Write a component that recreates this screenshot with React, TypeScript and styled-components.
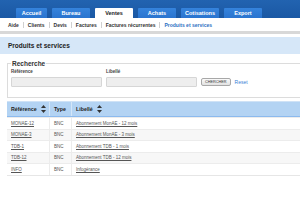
import React from "react";
import styled, { createGlobalStyle } from "styled-components";

const GlobalStyle = createGlobalStyle`
  html, body {
    margin: 0;
    padding: 0;
    background: #ffffff;
    font-family: "Liberation Sans", Arial, sans-serif;
    color: #333;
  }
  body {
    width: 300px;
    height: 200px;
    overflow: hidden;
  }
`;

const TopBar = styled.div`
  height: 18px;
  background: linear-gradient(to bottom, #2263b0, #1a58a4);
  display: flex;
  align-items: flex-end;
  gap: 5px;
  padding-left: 16px;
`;

const Tab = styled.div<{ $active?: boolean; $w?: number }>`
  width: ${(p) => p.$w ?? 38}px;
  height: 10px;
  border-radius: 1px 1px 0 0;
  background: ${(p) => (p.$active ? "#ffffff" : "linear-gradient(to bottom, #3583dc, #2a74cf)")};
  color: ${(p) => (p.$active ? "#222" : "#ffffff")};
  font-size: 5.5px;
  font-weight: bold;
  display: flex;
  align-items: center;
  justify-content: center;
`;

const SubNav = styled.div`
  height: 13px;
  display: flex;
  align-items: center;
  padding-left: 8px;
  background: #fff;
  border-bottom: 3px solid #d8d8d8;
  font-size: 5px;
  font-weight: bold;
  color: #333;
`;

const SubItem = styled.span<{ $current?: boolean }>`
  color: ${(p) => (p.$current ? "#2d6fc2" : "#333")};
`;

const Sep = styled.span`
  display: inline-block;
  width: 1px;
  height: 6px;
  background: #d0d0d0;
  margin: 0 4px;
`;

const PageTitle = styled.div`
  margin-top: 3px;
  height: 17px;
  background: #d6e7f8;
  display: flex;
  align-items: center;
  padding-left: 8px;
  font-size: 6.5px;
  font-weight: bold;
  color: #222;
`;

const Fieldset = styled.fieldset`
  margin: 6px 0 0 7px;
  padding: 2px 0 10px 3px;
  border: 1px solid #dcdcdc;
  border-right: none;
  min-width: 0;
`;

const Legend = styled.legend`
  font-size: 6.5px;
  font-weight: bold;
  color: #333;
  padding: 0 1px;
`;

const SearchRow = styled.div`
  display: flex;
  align-items: flex-end;
  gap: 4px;
`;

const Field = styled.div`
  display: flex;
  flex-direction: column;
  gap: 3px;
`;

const Label = styled.label`
  font-size: 4.5px;
  font-weight: bold;
  color: #444;
`;

const Input = styled.div`
  width: 89px;
  height: 8px;
  background: #eeeeee;
  border: 1px solid #d6d6d6;
  border-radius: 1px;
`;

const Button = styled.div`
  height: 6px;
  padding: 0 3px;
  margin-bottom: 1px;
  border: 1px solid #a8a8a8;
  border-radius: 2px;
  background: linear-gradient(to bottom, #fafafa, #e2e2e2);
  font-size: 3.8px;
  color: #333;
  display: flex;
  align-items: center;
`;

const ResetLink = styled.span`
  font-size: 5px;
  color: #3a7fd6;
  margin-bottom: 2px;
`;

const Table = styled.div`
  margin: 3px 0 0 7px;
  border-bottom: 1px solid #e6e6e6;
`;

const Row = styled.div<{ $alt?: boolean }>`
  display: grid;
  grid-template-columns: 43px 22px 1fr;
  height: 11.5px;
  background: ${(p) => (p.$alt ? "#f7f7f7" : "#ffffff")};
  border-top: 1px solid #ececec;
  box-sizing: border-box;
`;

const HeadRow = styled.div`
  display: grid;
  grid-template-columns: 43px 22px 1fr;
  height: 16px;
  background: #b3d3f3;
  border-top: 1px solid #cfe2f6;
  border-bottom: 1px solid #8cbaee;
  box-sizing: border-box;
`;

const HeadCell = styled.div`
  display: flex;
  align-items: center;
  padding-left: 4px;
  font-size: 5.3px;
  font-weight: bold;
  color: #222;
  border-right: 1px solid #d4e6f8;
  &:last-child {
    border-right: none;
  }
`;

const Cell = styled.div`
  display: flex;
  align-items: center;
  padding-left: 4px;
  font-size: 4.5px;
  color: #555;
  border-right: 1px solid #ececec;
  &:last-child {
    border-right: none;
  }
`;

const CellLink = styled.span`
  text-decoration: underline;
  color: #555;
`;

const SortIcon = () => (
  <svg width="5" height="8" viewBox="0 0 5 8" style={{ marginLeft: 4 }}>
    <polygon points="2.5,0 5,3 0,3" fill="#333" />
    <polygon points="0,5 5,5 2.5,8" fill="#333" />
  </svg>
);

const tabs = ["Accueil", "Bureau", "Ventes", "Achats", "Cotisations", "Export"];
const subItems = ["Aide", "Clients", "Devis", "Factures", "Factures récurrentes", "Produits et services"];
const rows = [
  ["MONAE-12", "BNC", "Abonnement MonAE - 12 mois"],
  ["MONAE-3", "BNC", "Abonnement MonAE - 3 mois"],
  ["TDB-1", "BNC", "Abonnement TDB - 1 mois"],
  ["TDB-12", "BNC", "Abonnement TDB - 12 mois"],
  ["INFO", "BNC", "Infogérance"],
];

const App = () => {
  return (
    <>
      <GlobalStyle />
      <TopBar>
        {tabs.map((t, i) => (
          <Tab key={t} $active={t === "Ventes"} $w={i === 0 ? 31 : 38}>
            {t}
          </Tab>
        ))}
      </TopBar>
      <SubNav>
        {subItems.map((s, i) => (
          <React.Fragment key={s}>
            {i > 0 && <Sep />}
            <SubItem $current={i === subItems.length - 1}>{s}</SubItem>
          </React.Fragment>
        ))}
      </SubNav>
      <PageTitle>Produits et services</PageTitle>
      <Fieldset>
        <Legend>Recherche</Legend>
        <SearchRow>
          <Field>
            <Label>Référence</Label>
            <Input />
          </Field>
          <Field>
            <Label>Libellé</Label>
            <Input />
          </Field>
          <Button>CHERCHER</Button>
          <ResetLink>Reset</ResetLink>
        </SearchRow>
      </Fieldset>
      <Table>
        <HeadRow>
          <HeadCell>
            Référence
            <SortIcon />
          </HeadCell>
          <HeadCell>Type</HeadCell>
          <HeadCell>
            Libellé
            <SortIcon />
          </HeadCell>
        </HeadRow>
        {rows.map((r, i) => (
          <Row key={r[0]} $alt={i % 2 === 1}>
            <Cell>
              <CellLink>{r[0]}</CellLink>
            </Cell>
            <Cell>{r[1]}</Cell>
            <Cell>
              <CellLink>{r[2]}</CellLink>
            </Cell>
          </Row>
        ))}
      </Table>
    </>
  );
};

export default App;
